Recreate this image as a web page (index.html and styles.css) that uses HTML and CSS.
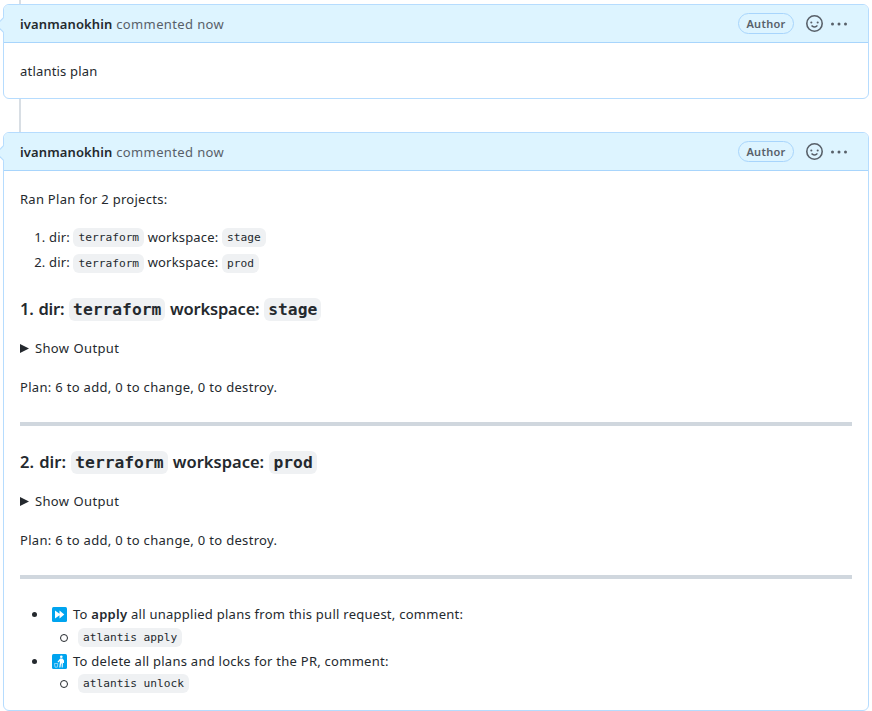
FILE: index.html
```
<!DOCTYPE html>
<html lang="en">
<head>
<meta charset="utf-8">
<title>Pull request conversation</title>
<link rel="stylesheet" href="styles.css">
</head>
<body>
<svg class="defs" width="0" height="0" aria-hidden="true">
  <symbol id="smiley" viewBox="0 0 16 16"><path fill-rule="evenodd" d="M1.5 8a6.5 6.5 0 1113 0 6.5 6.5 0 01-13 0zM8 0a8 8 0 100 16A8 8 0 008 0zM5 8a1 1 0 100-2 1 1 0 000 2zm7-1a1 1 0 11-2 0 1 1 0 012 0zM5.32 9.636a.75.75 0 011.038.175l.007.009c.103.118.22.222.35.31.264.178.683.37 1.285.37.602 0 1.02-.192 1.285-.371.13-.088.247-.192.35-.31l.007-.008a.75.75 0 111.222.87l-.614-.431c.614.43.614.431.613.431v.001l-.001.002-.002.003-.005.007-.014.019a1.984 1.984 0 01-.184.213c-.16.166-.338.316-.53.445-.63.418-1.37.638-2.127.629-.946 0-1.652-.308-2.126-.63a3.32 3.32 0 01-.715-.657l-.014-.02-.005-.006-.002-.003v-.002h-.001l.613-.432-.614.43a.75.75 0 01.183-1.044h.001z"/></symbol>
  <symbol id="kebab" viewBox="0 0 16 16"><circle cx="1.5" cy="8" r="1.5"/><circle cx="8" cy="8" r="1.5"/><circle cx="14.5" cy="8" r="1.5"/></symbol>
</svg>
<main class="timeline">
  <article class="comment">
    <header class="comment-header">
      <h2 class="byline"><strong>ivanmanokhin</strong> <span>commented now</span></h2>
      <span class="badge">Author</span>
      <svg class="smiley"><use href="#smiley"/></svg>
      <svg class="kebab"><use href="#kebab"/></svg>
    </header>
    <div class="comment-body"><p>atlantis plan</p></div>
  </article>
  <article class="comment">
    <header class="comment-header">
      <h2 class="byline"><strong>ivanmanokhin</strong> <span>commented now</span></h2>
      <span class="badge">Author</span>
      <svg class="smiley"><use href="#smiley"/></svg>
      <svg class="kebab"><use href="#kebab"/></svg>
    </header>
    <div class="comment-body">
      <p class="intro">Ran Plan for 2 projects:</p>
      <ol class="projects">
        <li>dir: <code>terraform</code> workspace: <code>stage</code></li>
        <li>dir: <code>terraform</code> workspace: <code>prod</code></li>
      </ol>
      <h3 class="first">1. dir: <code>terraform</code> workspace: <code>stage</code></h3>
      <details><summary>Show Output</summary></details>
      <p class="result">Plan: 6 to add, 0 to change, 0 to destroy.</p>
      <hr>
      <h3>2. dir: <code>terraform</code> workspace: <code>prod</code></h3>
      <details><summary>Show Output</summary></details>
      <p class="result">Plan: 6 to add, 0 to change, 0 to destroy.</p>
      <hr>
      <ul class="actions">
        <li><svg class="emoji" viewBox="0 0 15 15"><rect width="15" height="15" rx="1.5" fill="#00a4ef"/><path fill="#fff" d="M3 3.500l4.500 3.300V3.500L12.300 7.500 7.500 11.500V8.200L3 11.500z"/></svg><span class="apply">To <b>apply</b> all unapplied plans from this pull request, comment:</span>
          <ul><li><code>atlantis apply</code></li></ul>
        </li>
        <li><svg class="emoji" viewBox="0 0 15 15"><rect width="15" height="15" rx="1.5" fill="#00a4ef"/><circle cx="9.300" cy="2.800" r="1.300" fill="#fff"/><path fill="#fff" d="M8.200 4.400h2.300l1.500 2v2.500h-1V7l-.3 6.500H9.700V9.500h-.6l-.7 4H7.300L8 7 6.200 8.400 5.500 7.700z"/><path fill="none" stroke="#d5f1ff" stroke-width=".6" d="M2.500 9.500h3.300l-.5 3.700H3z"/></svg><span class="delete">To delete all plans and locks for the PR, comment:</span>
          <ul><li><code>atlantis unlock</code></li></ul>
        </li>
      </ul>
    </div>
  </article>
</main>
</body>
</html>
```
FILE: styles.css
```
* { box-sizing: border-box; }
body {
  margin: 0;
  background: #fff;
  color: #24292e;
  font: 13px/21px "Noto Sans", "Open Sans", sans-serif;
  letter-spacing: .27px;
  overflow: hidden;
}
.defs { position: absolute; }
.timeline {
  height: 711px;
  padding: 4px 3px 0;
  display: flex;
  flex-direction: column;
  gap: 33px;
  background: linear-gradient(#d8dee4, #d8dee4) 19px 0 / 2px 140px no-repeat;
}
.comment {
  position: relative;
  background: #fff;
  border: 1px solid #b6dcfe;
  border-radius: 6px;
}
.comment::before {
  content: "";
  position: absolute;
  left: -6px;
  top: 14px;
  width: 11px;
  height: 11px;
  background: #ddf4ff;
  border: solid #b6dcfe;
  border-width: 0 0 1px 1px;
  transform: rotate(45deg);
}
.comment-header {
  position: relative;
  height: 38px;
  padding: 0 21px 0 16px;
  display: flex;
  align-items: center;
  background: #ddf4ff;
  border-bottom: 1px solid #a8d5fc;
  border-radius: 5px 5px 0 0;
}
.byline {
  margin: 0 auto 0 0;
  padding-top: 2px;
  font-size: 13px;
  font-weight: 400;
  letter-spacing: .38px;
  color: #586069;
}
.byline strong { font-weight: 600; letter-spacing: .12px; color: #24292e; }
.badge {
  width: 56px;
  height: 21px;
  margin-right: 12px;
  border: 1px solid #a8d5fc;
  border-radius: 11px;
  color: #586069;
  font-size: 11px;
  font-weight: 600;
  line-height: 19px;
  text-align: center;
}
svg { fill: #586069; }
.smiley { width: 17px; height: 17px; margin-right: 8px; }
.kebab { width: 16px; height: 16px; }
.comment-body { padding: 18px 16px 16px; }
.comment:first-child .comment-body { height: 55px; }
.comment:last-child .comment-body { height: 539px; }
p { margin: 0; height: 21px; }
code {
  font-family: "DejaVu Sans Mono", monospace;
  font-size: 11.200px;
  letter-spacing: 0;
  background: #eff1f3;
  border-radius: 6px;
  padding: 3px 5px;
}
.comment:first-child p { letter-spacing: .2px; }
.projects { margin: 17px 0 0; padding-left: 29px; letter-spacing: .18px; }
.projects li { height: 21px; }
.projects li:first-child code { vertical-align: 1px; }
.projects li + li { margin-top: 4px; }
h3 {
  margin: 25px 0 18px;
  height: 22px;
  font-size: 16.500px;
  font-weight: 600;
  line-height: 22px;
  letter-spacing: 0;
  word-spacing: 1px;
}
h3.first { letter-spacing: -.2px; word-spacing: .7px; }
h3 code { font-size: 16.300px; padding: 2px 4px; }
details { height: 21px; }
summary {
  display: flex;
  align-items: center;
  letter-spacing: .34px;
  word-spacing: .5px;
}
summary::before {
  content: "";
  width: 9px;
  height: 9px;
  margin-right: 6px;
  background: #24292e;
  clip-path: polygon(0 0, 100% 50%, 0 100%);
}
.result { margin-top: 18px; letter-spacing: .31px; }
hr {
  height: 4px;
  margin: 24px 0 0;
  border: 0;
  background: #d0d7de;
}
ul { margin: 0; list-style: none; }
.actions { margin-top: 25px; padding-left: 12px; }
.actions > li { height: 47px; letter-spacing: .26px; }
.actions > li::before {
  content: "";
  display: inline-block;
  width: 5px;
  height: 5px;
  margin-right: 15px;
  border-radius: 50%;
  background: #24292e;
  vertical-align: 2px;
}
.actions ul { padding-left: 28px; }
.actions ul li { display: flex; align-items: center; height: 19px; margin-top: 3px; line-height: 13px; }
.actions > li + li ul li { margin-top: 2px; }
.actions ul li::before {
  content: "";
  width: 6px;
  height: 6px;
  margin-right: 10px;
  border: 1px solid #24292e;
  border-radius: 50%;
}
.emoji { width: 15px; height: 15px; margin-right: 6px; vertical-align: -3px; }
b { font-weight: 600; }
```
